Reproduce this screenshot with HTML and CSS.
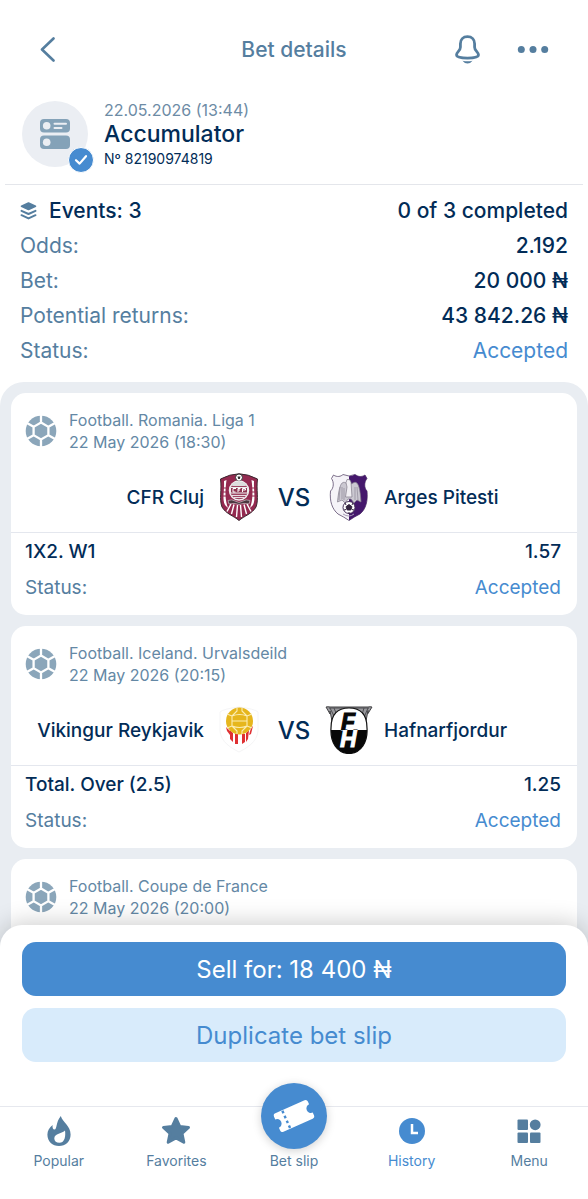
FILE: index.html
```html
<!DOCTYPE html>
<html lang="en">
<head>
  <meta charset="UTF-8" />
  <meta name="viewport" content="width=device-width, initial-scale=1.0" />
  <title>Bet details</title>
  <link rel="stylesheet" href="styles.css">
</head>
<body>
  <!-- shared icons -->
  <svg class="defs" aria-hidden="true">
    <symbol id="football" viewBox="0 0 32 32">
      <circle cx="16" cy="16" r="15.3" fill="#8ba6ba" />
      <path d="M16 7.5 23.4 11.8V20.2L16 24.5 8.6 20.2V11.8ZM16 8V0M23.4 11.8 31 7.4M23.4 20.2 31 24.6M16 24V32M8.6 20.2 1 24.6M8.6 11.8 1 7.4" fill="none" stroke="#fff" stroke-width="2.3" />
    </symbol>
  </svg>

  <header class="topbar">
    <button class="icon-btn back" aria-label="Back">
      <svg width="16" height="26" viewBox="0 0 16 26"><path d="M14.500 1.500 3 12.500 14.500 23.500" fill="none" stroke="#557e9f" stroke-width="2.6" stroke-linecap="round" stroke-linejoin="round" /></svg>
    </button>
    <h1>Bet details</h1>
    <div class="topbar-actions">
      <button class="icon-btn" aria-label="Notifications">
        <svg width="28" height="30" viewBox="0 0 28 30">
          <path d="M14.500 1.700C10 1.700 7.400 4.800 7.400 8.700V12.300C7.400 15.700 3.500 17 3.500 20.100 3.500 22.100 8.500 23.100 14.500 23.100S25.500 22.100 25.500 20.100C25.500 17 21.600 15.700 21.600 12.300V8.700C21.600 4.800 19 1.700 14.500 1.700Z" fill="none" stroke="#557e9f" stroke-width="2.8" />
          <path d="M9.500 25.700Q14.500 26.700 19.500 25.700Q17.500 28.500 14.500 28.500T9.500 25.700Z" fill="#557e9f" />
        </svg>
      </button>
      <button class="icon-btn" aria-label="More">
        <svg width="32" height="8" viewBox="0 0 32 8" fill="#557e9f"><circle cx="4.3" cy="3.600" r="3.500" /><circle cx="16" cy="3.600" r="3.500" /><circle cx="27.7" cy="3.600" r="3.500" /></svg>
      </button>
    </div>
  </header>

  <main>
    <section class="bet-head">
      <div class="avatar">
        <svg width="30" height="30" viewBox="0 0 30 30">
          <rect x="0" y="0" width="30" height="13.5" rx="4" fill="#84a2b8" />
          <rect x="0" y="16.5" width="30" height="13.5" rx="4" fill="#84a2b8" />
          <circle cx="6.7" cy="6.8" r="3.8" fill="#ebeef3" />
          <circle cx="6.7" cy="23.2" r="3.8" fill="#ebeef3" />
          <path d="M14.5 4.7H26M14.5 9H21.5" stroke="#ebeef3" stroke-width="2" stroke-linecap="round" />
        </svg>
        <span class="avatar-badge">
          <svg width="14" height="12" viewBox="0 0 14 12"><path d="M2 6.2 5.6 9.6 12 2.2" fill="none" stroke="#fff" stroke-width="2.2" stroke-linecap="round" stroke-linejoin="round" /></svg>
        </span>
      </div>
      <div>
        <div class="bet-date">22.05.2026 (13:44)</div>
        <h2>Accumulator</h2>
        <div class="bet-number">Nº 82190974819</div>
      </div>
    </section>

    <dl class="summary">
      <div class="row row-events">
        <dt>
          <svg width="17" height="18" viewBox="0 0 17 18">
            <path d="M8.5 1 15.500 4.200 8.5 7.400 1.500 4.200Z" fill="#557e9f" stroke="#557e9f" stroke-width="1.600" stroke-linejoin="round" />
            <path d="M1.500 8.900 8.5 12 15.500 8.900M1.500 13.200 8.5 16.400 15.500 13.200" fill="none" stroke="#557e9f" stroke-width="2" stroke-linecap="round" stroke-linejoin="round" />
          </svg>
          Events: 3
        </dt>
        <dd>0 of 3 completed</dd>
      </div>
      <div class="row"><dt>Odds:</dt><dd>2.192</dd></div>
      <div class="row"><dt>Bet:</dt><dd>20 000 ₦</dd></div>
      <div class="row"><dt>Potential returns:</dt><dd>43 842.26 ₦</dd></div>
      <div class="row"><dt>Status:</dt><dd class="accepted">Accepted</dd></div>
    </dl>

    <section class="events">
      <article class="card">
        <div class="card-meta">
          <svg class="sport"><use href="#football" /></svg>
          <div>
            <div>Football. Romania. Liga 1</div>
            <div>22 May 2026 (18:30)</div>
          </div>
        </div>
        <div class="teams">
          <div class="team home">
            <span>CFR Cluj</span>
            <svg class="crest" viewBox="0 0 48 48">
              <path d="M5.5 6Q15 1 24 .8 33 1 42.5 6C41 17 44 26 41 34 37 41 29 43 24 47.5 19 43 11 41 7 34 4 26 7 17 5.5 6Z" fill="#942a50" stroke="#3a2830" />
              <path d="M9 8C9.500 18 7 26 10 32L13 35C10 27 10 18 11.500 7ZM39 8C38.500 18 41 26 38 32L35 35C38 27 38 18 36.500 7Z" fill="#fff" />
              <path d="M8 15H13M8 19H12M8 23H12M40 15H35M40 19H36M40 23H36" stroke="#942a50" />
              <circle cx="24" cy="4.500" r="3.500" fill="#fff" stroke="#333" />
              <path d="M22.500 3.500H25.500L24.800 6H23.200Z" fill="#333" />
              <circle cx="24" cy="17.500" r="9.500" fill="#9d4563" stroke="#eee" stroke-width="1.500" />
              <path d="M16 11Q24 6 32 11L30.500 13H17.500Z" fill="#ddd" />
              <path d="M15.500 14.500H32.500V20H15.500Z" fill="#8e3350" stroke="#eee" />
              <path d="M21 15.500H18V19H20.500M23 19V15.500H25.500M23 17H25M27.500 19V15.500H30.500V17H28" fill="none" stroke="#fff" />
              <path d="M17 22.500H31M19 24.500H29" stroke="#e8dce2" stroke-width="1.200" />
              <path d="M13 27.500Q17 26 20 28L24 29.500 28 28Q31 26 35 27.500L34 31Q29 29.500 24 31.500 19 29.500 14 31Z" fill="#4b3740" stroke="#cfc2c8" stroke-width=".7" />
              <path d="M16 31 12 38.500M19 31.500 16.500 41M22.500 32 21.500 44M25.500 32 26.500 44M29 31.500 31.500 41M32 31 36 38.500" stroke="#fff" stroke-width="1.400" />
            </svg>
          </div>
          <div class="versus">VS</div>
          <div class="team away">
            <svg class="crest" viewBox="0 0 48 48">
              <path d="M8.500 2C12 4.500 16 3.500 18 1.500Q24 4.500 30 1.500C33 3.500 36 4.500 40 2L42 5.500C39 9 39 15 42 18C43 28 41 36 35 41Q29 44 24 47.500 19 44 13 41C7 36 4.500 28 5.500 18 9 15 9 9 6.500 5.500Z" fill="#f5f3f8" stroke="#5a4a6c" stroke-width=".8" />
              <path d="M24 3.200Q27 3.200 30 1.500C33 3.500 36 4.500 40 2L42 5.500C39 9 39 15 42 18C43 28 41 36 35 41Q29 44 24 47.500Z" fill="#45186c" />
              <path d="M21 10C16 7 14 14 12.500 29L17 27 20 30 23 26H26L29 30 32 27 36 29C35 14 33 7 28 10Q24 13 21 10Z" fill="#cbc8d1" stroke="#817b8a" stroke-width=".7" />
              <path d="M15 14 14 27M17 14 17 26M19 15V27M30 14V27M32 14 33 27" stroke="#918b99" stroke-width=".7" />
              <path d="M22 6.500Q25 5.500 26 9L27 24H20.500L22 14Q20 9 22 6.500Z" fill="#f1eff3" stroke="#817b8a" stroke-width=".7" />
              <circle cx="24" cy="34.500" r="6" fill="#fff" stroke="#453058" />
              <path d="M24 31.500 27 33.700 25.800 37H22.200L21 33.700ZM20 30 21 32M28 30 27 32M19 37 21 36.500M29 37 27 36.500M24 39V41" fill="#342440" stroke="#342440" />
              <path d="M18 41Q24 45 29 41" fill="none" stroke="#a79bb5" />
            </svg>
            <span>Arges Pitesti</span>
          </div>
        </div>
        <div class="card-result">
          <div class="row pick"><span>1X2. W1</span><span>1.57</span></div>
          <div class="row"><span>Status:</span><span class="accepted">Accepted</span></div>
        </div>
      </article>

      <article class="card">
        <div class="card-meta">
          <svg class="sport"><use href="#football" /></svg>
          <div>
            <div>Football. Iceland. Urvalsdeild</div>
            <div>22 May 2026 (20:15)</div>
          </div>
        </div>
        <div class="teams">
          <div class="team home">
            <span>Vikingur Reykjavik</span>
            <svg class="crest" viewBox="0 0 48 48">
              <path d="M5 6Q8 3 24 1 40 3 43 6V25C42 36 32 42 24 46 16 42 6 36 5 25Z" fill="#fff" stroke="#f5f5f6" />
              <path d="M11 21 15 25V29L12 25ZM15 24 18 27V36L15 33ZM20 28H23V38H20ZM27 28H30V36L27 38ZM31 27 34 24 33 33 31 36ZM36 22 38 20 36 28 34 29Z" fill="#df3032" />
              <circle cx="24.500" cy="15" r="13.500" fill="#e6b61d" />
              <path d="M17 10Q24.500 7 32 10V20Q24.500 23 17 20ZM17 15H32M17 10 12 8M32 10 37 8M17 20 12 22M32 20 37 22M22 2V5L17 10M27 2V5L32 10M22 28V25L17 20M27 28V25L32 20" fill="none" stroke="#fbedb3" stroke-width="1.100" />
            </svg>
          </div>
          <div class="versus">VS</div>
          <div class="team away">
            <svg class="crest" viewBox="0 0 48 48">
              <linearGradient id="fh-split" gradientUnits="userSpaceOnUse" x1="0" y1="0" x2="0" y2="48">
                <stop offset=".5" stop-color="#080808" />
                <stop offset=".5" stop-color="#fff" />
              </linearGradient>
              <path d="M1 1Q3 .5 5 1H43Q45 .5 47 1L43 7.500V4.500L41 15H7L5 5V8Z" fill="#99999d" stroke="#424245" />
              <path d="M5 2 11 14M9 2 13 12M39 2 36 12M43 2 38 14M4 2H44" stroke="#4c4c50" />
              <path d="M6 22C6 8 13 2 24 2S42 8 42 22C43 36 36 47.500 24 47.500S5 36 6 22Z" fill="#fff" stroke="#111" stroke-width="1.200" />
              <path d="M6 24H42C42 38 35 47.500 24 47.500S6 38 6 24Z" fill="#080808" />
              <text class="crest-letters" x="16 15" y="24 41">FH</text>
            </svg>
            <span>Hafnarfjordur</span>
          </div>
        </div>
        <div class="card-result">
          <div class="row pick"><span>Total. Over (2.5)</span><span>1.25</span></div>
          <div class="row"><span>Status:</span><span class="accepted">Accepted</span></div>
        </div>
      </article>

      <article class="card">
        <div class="card-meta">
          <svg class="sport"><use href="#football" /></svg>
          <div>
            <div>Football. Coupe de France</div>
            <div>22 May 2026 (20:00)</div>
          </div>
        </div>
      </article>
    </section>
  </main>

  <footer class="sheet">
    <div class="sheet-actions">
      <button class="btn btn-primary">Sell for: 18 400 ₦</button>
      <button class="btn btn-secondary">Duplicate bet slip</button>
    </div>
    <nav class="tabs">
      <a href="#popular">
        <svg width="24" height="30" viewBox="0 0 24 30"><path fill-rule="evenodd" d="M13.800 0C15.500 6 23.600 10 23.600 18.500 23.600 25.500 18.500 30 12 30S.4 25.500.4 18.500C.4 14.500 2.500 11.500 5.600 9 5.300 11.500 5.800 13.500 7.500 13.500 10.200 13.500 8.500 6.500 13.800 0ZM18 14.500C15.500 17.500 7.300 17.300 7.300 22.500 7.300 25.200 9.500 26.800 12.300 26.800 18 26.800 18.800 20 18 14.500Z" fill="#557e9f" /></svg>
        Popular
      </a>
      <a href="#favorites">
        <svg width="30" height="30" viewBox="0 0 30 30"><path d="M15 2.500 18.700 10.500 27.500 11.500 21 17.500 22.800 26.200 15 22 7.200 26.200 9 17.500 2.500 11.500 11.300 10.500Z" fill="#557e9f" stroke="#557e9f" stroke-width="3" stroke-linejoin="round" /></svg>
        Favorites
      </a>
      <a href="#slip" class="slip">
        <span class="slip-icon">
          <svg width="42" height="38" viewBox="0 0 42 38">
            <g transform="rotate(-24 21 19)">
              <path d="M5 9H37Q39.500 9 39.500 11.500V14.500A4.500 4.500 0 0 0 39.500 23.500V26.500Q39.500 29 37 29H5Q2.500 29 2.500 26.500V23.500A4.500 4.500 0 0 0 2.500 14.500V11.500Q2.500 9 5 9Z" fill="#fff" />
              <path d="M12.500 9.500V29" stroke="#468bd0" stroke-width="2.400" stroke-dasharray="2.700 2.700" />
            </g>
          </svg>
        </span>
        Bet slip
      </a>
      <a href="#history" class="active">
        <svg width="26" height="30" viewBox="0 0 26 30"><circle cx="13" cy="15" r="13" fill="#468bd0" /><path d="M13 8V17H19" fill="none" stroke="#fff" stroke-width="2.500" /></svg>
        History
      </a>
      <a href="#menu">
        <svg width="24" height="30" viewBox="0 0 24 30" fill="#557e9f"><rect x=".5" y="3.500" width="10.500" height="10.500" rx="1" /><circle cx="18.200" cy="8.800" r="5.400" /><rect x=".5" y="16.500" width="10.500" height="10.500" rx="1" /><rect x="13" y="16.500" width="10.500" height="10.500" rx="1" /></svg>
        Menu
      </a>
    </nav>
  </footer>
</body>
</html>
```
FILE: styles.css
```css
* {
  margin: 0;
  padding: 0;
  box-sizing: border-box;
}
body {
  font-family: Inter, "Liberation Sans", sans-serif;
  background: #fff;
  color: #557e9f;
  height: 100vh;
  display: flex;
  flex-direction: column;
  overflow: hidden;
}
button {
  border: none;
  background: none;
  font-family: inherit;
  color: inherit;
  cursor: pointer;
}
svg {
  display: block;
  flex: none;
}
.defs {
  position: absolute;
  width: 0;
  height: 0;
}

/* top bar */
.topbar {
  display: grid;
  grid-template-columns: 1fr auto 1fr;
  align-items: center;
  height: 99px;
  padding: 0 39px;
  flex: none;
}
.topbar h1 {
  font-size: 21px;
  font-weight: 500;
}
.topbar-actions {
  display: flex;
  align-items: center;
  justify-content: flex-end;
  gap: 36px;
}
.back {
  justify-self: start;
}

main {
  flex: 1;
  min-height: 0;
  overflow-y: auto;
  scrollbar-width: none;
}

/* bet header */
.bet-head {
  display: flex;
  gap: 16px;
  margin: 0 5px;
  padding: 2px 17px 15px;
  border-bottom: 1px solid #e4e6eb;
}
.avatar {
  position: relative;
  width: 66px;
  height: 66px;
  border-radius: 50%;
  background: #ebeef3;
  display: flex;
  align-items: center;
  justify-content: center;
}
.avatar-badge {
  position: absolute;
  right: -6px;
  bottom: -6px;
  width: 26px;
  height: 26px;
  border-radius: 50%;
  border: 1px solid #fff;
  background: #468bd0;
  display: flex;
  align-items: center;
  justify-content: center;
}
.bet-date {
  font-size: 16px;
  line-height: 18px;
  color: #6d8ba5;
}
.bet-head h2 {
  font-size: 23px;
  line-height: 30px;
  font-weight: 500;
  color: #022c57;
}
.bet-number {
  font-size: 14px;
  line-height: 20px;
  color: #022c57;
}

/* totals */
.row {
  display: flex;
  justify-content: space-between;
}
.summary {
  padding: 8px 20px 14px;
  font-size: 21px;
  line-height: 35px;
}
.summary dt {
  display: flex;
  align-items: center;
  gap: 12px;
}
.summary dd,
.row-events dt {
  font-weight: 500;
  color: #022c57;
}
.summary .accepted {
  color: #468bd0;
  font-weight: 400;
}
.accepted {
  color: #468bd0;
}

/* events */
.events {
  display: flex;
  flex-direction: column;
  gap: 11px;
  padding: 11px;
  background: #e9edf2;
  border-radius: 24px 24px 0 0;
}
.card {
  background: #fff;
  border-radius: 15px;
  min-height: 222px;
}
.card-meta {
  display: flex;
  align-items: center;
  gap: 12px;
  padding: 16px 14px 20px;
  font-size: 16px;
  line-height: 22px;
  color: #6488a5;
}
.sport {
  width: 32px;
  height: 32px;
}
.teams {
  display: grid;
  grid-template-columns: 1fr 62px 1fr;
  align-items: center;
  padding: 0 14px 11px;
  border-bottom: 1px solid #e4e7ee;
  font-size: 19px;
  font-weight: 500;
  color: #022c57;
}
.team {
  display: flex;
  align-items: center;
  gap: 11px;
  white-space: nowrap;
}
.home {
  justify-content: flex-end;
}
.crest {
  width: 48px;
  height: 48px;
}
.crest-letters {
  font: italic bold 23px "Liberation Sans", sans-serif;
  fill: url(#fh-split);
  stroke: url(#fh-split);
}
.versus {
  text-align: center;
  font-size: 24px;
}
.card-result {
  padding: 1px 16px 9px 14px;
  font-size: 19px;
  line-height: 36px;
}
.pick {
  font-weight: 500;
  color: #022c57;
}

/* bottom sheet */
.sheet {
  position: relative;
  flex: none;
  margin-top: -24px;
  background: #fff;
  border-radius: 22px 22px 0 0;
  box-shadow: 0 -2px 24px rgba(0, 0, 0, 0.2);
}
.sheet-actions {
  display: flex;
  flex-direction: column;
  gap: 12px;
  padding: 17px 22px 44px;
}
.btn {
  height: 54px;
  border-radius: 14px;
  font-size: 24px;
  font-weight: 400;
}
.btn-primary {
  background: #468bd0;
  color: #fff;
}
.btn-secondary {
  background: #d8ebfb;
  color: #468bd0;
}
.tabs {
  display: grid;
  grid-template-columns: repeat(5, 1fr);
  grid-template-rows: 92px;
  border-top: 1px solid #e6e8ee;
}
.tabs a {
  display: flex;
  flex-direction: column;
  align-items: center;
  justify-content: flex-end;
  gap: 7px;
  padding-bottom: 30px;
  font-size: 14px;
  line-height: 16px;
  font-weight: 400;
  color: #557e9f;
  text-decoration: none;
}
.tabs .slip {
  gap: 4px;
}
.tabs .active {
  color: #468bd0;
}
.slip-icon {
  display: flex;
  align-items: center;
  justify-content: center;
  flex: none;
  width: 66px;
  height: 66px;
  border-radius: 50%;
  background: #468bd0;
  box-shadow: 0 2px 10px rgba(0, 0, 0, 0.18);
}
```
